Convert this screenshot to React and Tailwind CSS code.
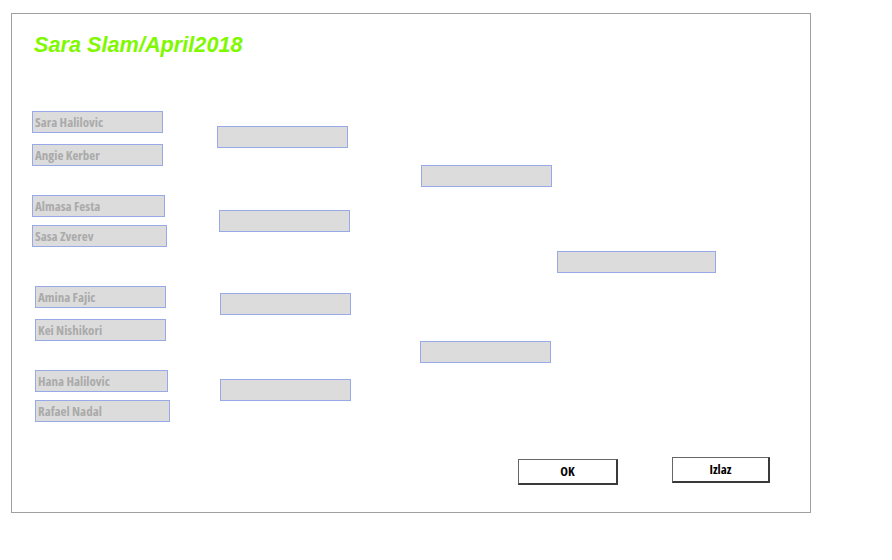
import React from "react";

const fieldFont = { fontFamily: '"Open Sans", "Liberation Sans", sans-serif', fontStretch: "75%" };

function Field({ text, className }) {
  return (
    <div
      className={`h-[22px] shrink-0 border border-[#97a9e6] bg-[#dcdcdc] pl-[2px] flex items-center text-[13px] font-bold text-[#aaaaaa] leading-none whitespace-nowrap overflow-hidden ${className}`}
      style={fieldFont}
    >
      {text}
    </div>
  );
}

function Btn({ children, className }) {
  return (
    <button
      className={`h-[26px] border-t border-l border-r-2 border-b-2 border-t-[#666666] border-l-[#666666] border-r-[#3a3a3a] border-b-[#3a3a3a] bg-white text-[13px] font-bold text-black flex items-center justify-center leading-none ${className}`}
      style={fieldFont}
    >
      {children}
    </button>
  );
}

export default function App() {
  return (
    <div className="w-[892px] h-[560px] bg-white overflow-hidden pt-[13px] pl-[11px]">
      <div className="w-[800px] h-[500px] border border-[#a0a0a0] flex flex-col">
        <h1
          className="ml-[22px] mt-[18px] h-[26px] leading-[26px] text-[21.7px] font-bold italic text-[#80f800]"
          style={{ fontFamily: '"Liberation Sans", Arial, sans-serif' }}
        >
          Sara Slam/April2018
        </h1>

        <div className="flex items-start">
          {/* Round 1 */}
          <div className="ml-[20px] flex flex-col shrink-0">
            <Field text="Sara Halilovic" className="mt-[53px] w-[131px]" />
            <Field text="Angie Kerber" className="mt-[11px] w-[131px]" />
            <Field text="Almasa Festa" className="mt-[29px] w-[133px]" />
            <Field text="Sasa Zverev" className="mt-[8px] w-[135px]" />
            <Field text="Amina Fajic" className="mt-[39px] ml-[3px] w-[131px]" />
            <Field text="Kei Nishikori" className="mt-[11px] ml-[3px] w-[131px]" />
            <Field text="Hana Halilovic" className="mt-[29px] ml-[3px] w-[133px]" />
            <Field text="Rafael Nadal" className="mt-[8px] ml-[3px] w-[135px]" />
          </div>

          {/* Round 2 */}
          <div className="ml-[47px] flex flex-col shrink-0">
            <Field text="" className="mt-[68px] w-[131px]" />
            <Field text="" className="mt-[62px] ml-[2px] w-[131px]" />
            <Field text="" className="mt-[61px] ml-[3px] w-[131px]" />
            <Field text="" className="mt-[64px] ml-[3px] w-[131px]" />
          </div>

          {/* Round 3 */}
          <div className="ml-[69px] flex flex-col shrink-0">
            <Field text="" className="mt-[107px] ml-[1px] w-[131px]" />
            <Field text="" className="mt-[154px] w-[131px]" />
          </div>

          {/* Final */}
          <div className="ml-[5px] flex flex-col shrink-0">
            <Field text="" className="mt-[193px] w-[159px]" />
          </div>
        </div>

        <div className="flex items-start mt-[35px] ml-[506px]">
          <Btn className="mt-[2px] w-[100px]">OK</Btn>
          <Btn className="ml-[54px] w-[98px]">Izlaz</Btn>
        </div>
      </div>
    </div>
  );
}
